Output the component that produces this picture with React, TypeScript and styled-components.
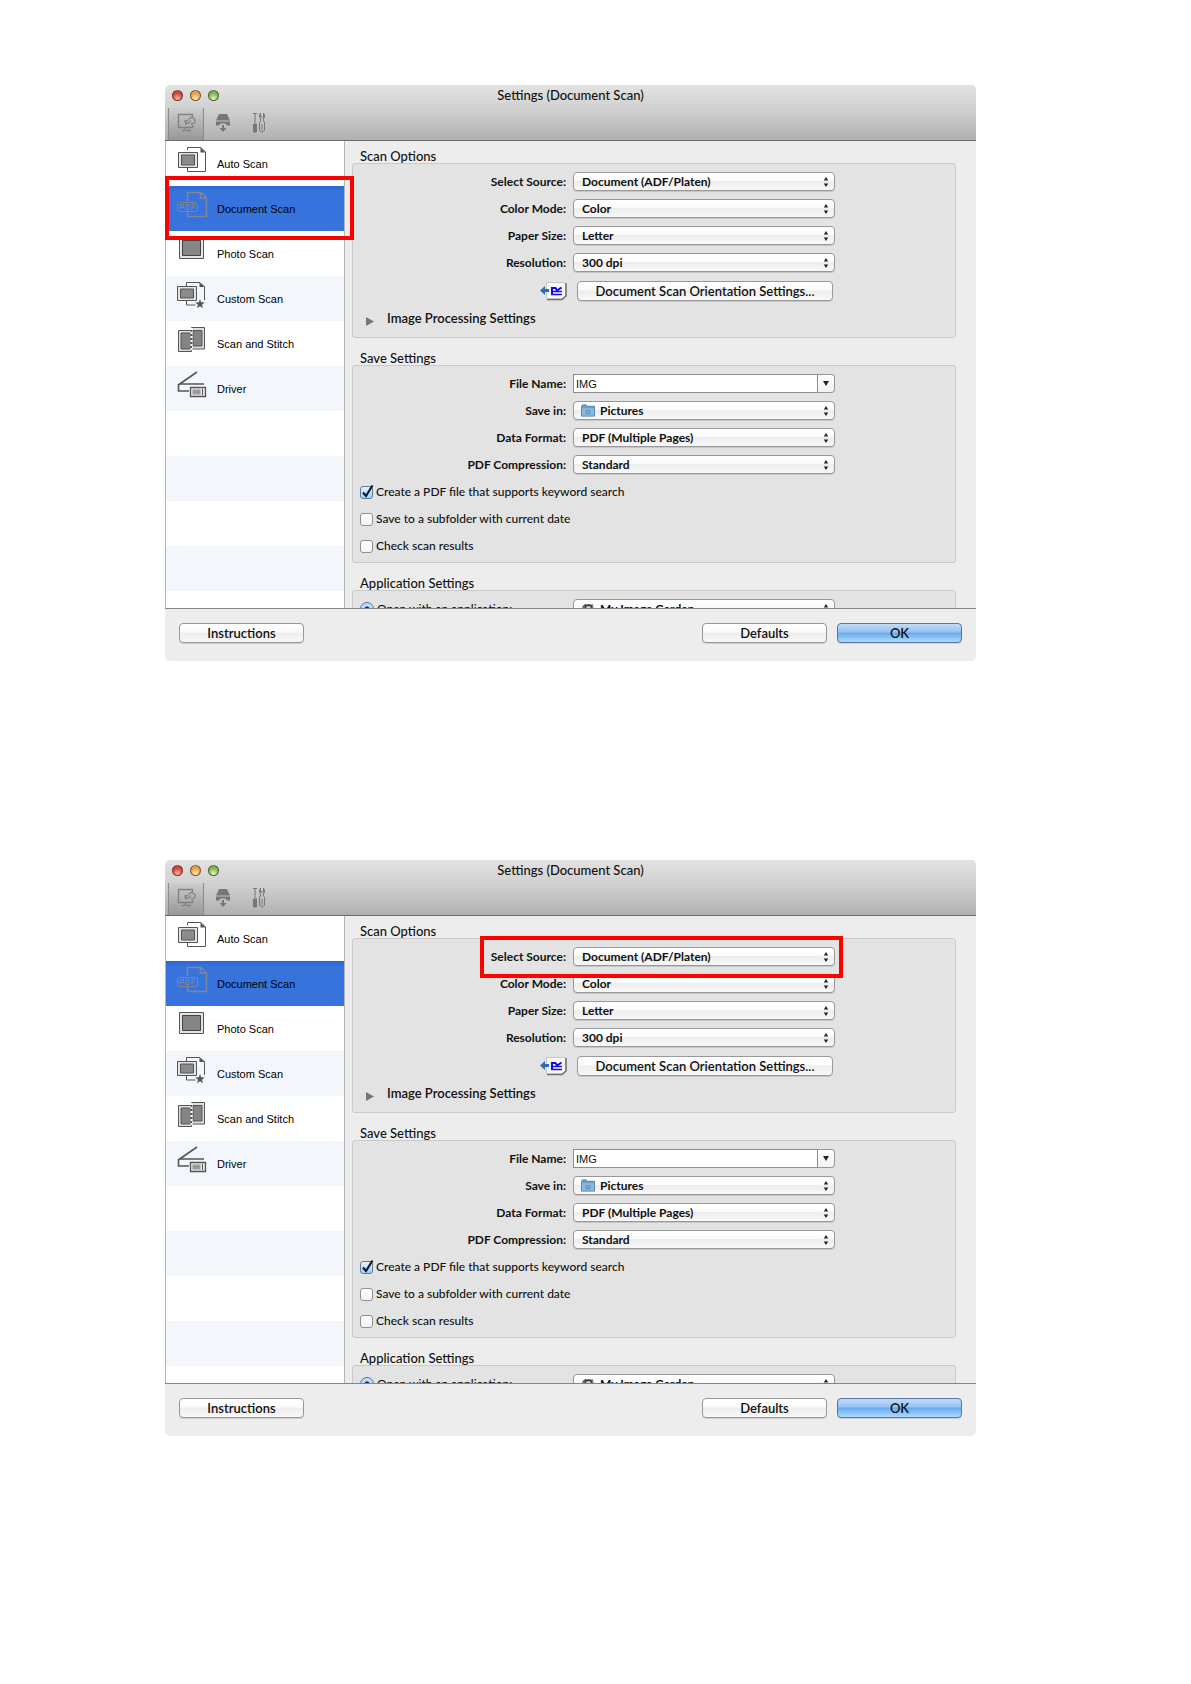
import React, { useId, useState } from "react";
import styled, { createGlobalStyle, css } from "styled-components";

const GlobalStyle = createGlobalStyle`
  *, *::before, *::after { box-sizing: border-box; }
  body {
    margin: 0;
    background: #fff;
    color: #111;
    font: 500 12px/16px Lato, "Open Sans", sans-serif;
  }
  button, input, select { font: inherit; color: inherit; margin: 0; }
  h1, h2, ul { margin: 0; padding: 0; font: inherit; }
`;

const Page = styled.main`
  display: flex;
  flex-direction: column;
  gap: 199px;
  padding: 85px 215px 248px 165px;
`;

const Window = styled.section`
  display: flex;
  flex-direction: column;
  background: #ededed;
  border-radius: 5px;
`;

const Header = styled.header`
  padding: 2px 3px 0;
  border-bottom: 1px solid #6c6c6c;
  border-radius: 5px 5px 0 0;
  background: linear-gradient(#e2e2e2, #d0d0d0 45%, #b0b0b0);
`;

const TitleBar = styled.div`
  display: grid;
  grid-template-columns: 1fr auto 1fr;
  align-items: center;
  height: 14px;
  margin-bottom: 7px;
`;

const Title = styled.h1`
  font-size: 13px;
  font-weight: 500;
`;

const Lights = styled.div`
  display: flex;
  gap: 7px;
  padding-left: 4px;
`;

const Light = styled.button<{ $tone: string; $glow: string }>`
  width: 11px;
  height: 11px;
  padding: 0;
  border: 1px solid rgba(60, 40, 30, 0.65);
  border-radius: 50%;
  background: radial-gradient(circle at 50% 85%, ${(p) => p.$glow}, ${(p) => p.$tone} 60%);
`;

const Toolbar = styled.div`
  display: flex;
`;

const ToolTab = styled.button<{ $active?: boolean }>`
  display: flex;
  align-items: center;
  justify-content: center;
  width: 36px;
  height: 32px;
  padding: 0 0 2px 1px;
  border: 0;
  background: none;
  ${(p) =>
    p.$active &&
    css`
      border: solid #8a8a8a;
      border-width: 0 1px;
      background: linear-gradient(rgba(0, 0, 0, 0.02), rgba(0, 0, 0, 0.14));
    `}
`;

const Body = styled.div`
  display: flex;
  height: 467px;
  overflow: hidden;
`;

const Sidebar = styled.nav`
  position: relative;
  z-index: 1;
  flex: none;
  width: 180px;
  border: solid #b4b4b4;
  border-width: 0 1px;
  background: repeating-linear-gradient(#fff 0 45px, #f3f7fb 45px 90px);
`;

const ScanList = styled.ul`
  list-style: none;
`;

const ScanItem = styled.li`
  position: relative;
`;

const ScanTab = styled.button<{ $active: boolean }>`
  display: flex;
  align-items: center;
  gap: 9px;
  width: 100%;
  height: 45px;
  padding: 0 0 0 11px;
  border: 0;
  background: ${(p) => (p.$active ? "linear-gradient(#2b68d0, #3673dc 6px)" : "none")};
  color: #000;
  font: 11px/16px "Liberation Sans", Arial, sans-serif;
  text-align: left;

  svg { flex: none; margin-bottom: 7px; }
`;

const Panel = styled.div`
  flex: 1;
  min-width: 0;
  padding: 9px 20px 0 7px;
`;

const Group = styled.section`
  margin-bottom: 14px;
`;

const GroupTitle = styled.h2`
  padding-left: 8px;
  font-size: 13px;
  line-height: 13px;
`;

const GroupBox = styled.div`
  padding: 8px 8px 8px 7px;
  border: 1px solid #cacaca;
  border-radius: 3px;
  background: #e3e3e3;
`;

const Rows = styled.div`
  display: flex;
  flex-direction: column;
  gap: 8px;
`;

const Row = styled.div`
  display: grid;
  grid-template-columns: 206px 262px;
  column-gap: 7px;
  align-items: center;
`;

const RowLabel = styled.label`
  text-align: right;
  font-weight: 700;
`;

const Annotation = styled.span<{ $inset: string }>`
  position: absolute;
  z-index: 2;
  inset: ${(p) => p.$inset};
  border: 4px solid #fe0000;
  pointer-events: none;
`;

const SelectFrame = styled.div`
  position: relative;
  display: grid;
  grid-template-columns: 22px 1fr 18px;
  align-items: center;

  svg { grid-row: 1; justify-self: center; z-index: 1; pointer-events: none; }
  svg:last-of-type { grid-column: 3; }
`;

const raised = css`
  border: 1px solid #989898;
  border-radius: 4px;
  background: linear-gradient(#fff, #fbfbfb 45%, #ededed 50%, #f8f8f8);
  box-shadow: 0 1px 0 rgba(0, 0, 0, 0.12);
`;

const SelectBox = styled.select<{ $icon: boolean }>`
  ${raised}
  grid-area: 1 / 1 / 2 / 4;
  appearance: none;
  width: 100%;
  height: 19px;
  padding: 0 20px 0 ${(p) => (p.$icon ? 26 : 8)}px;
  font-weight: 700;
`;

const IconSlot = styled.span`
  display: flex;
  grid-area: 1 / 1;
  z-index: 1;
  padding-left: 8px;
  pointer-events: none;
`;

const Combo = styled.div`
  display: flex;
  height: 19px;
`;

const ComboInput = styled.input`
  flex: 1;
  min-width: 0;
  padding: 0 2px;
  border: 1px solid #8d8d8d;
  background: #fff;
  font: 11px/16px "Liberation Sans", Arial, sans-serif;
`;

const ComboButton = styled.button`
  display: flex;
  align-items: center;
  justify-content: center;
  width: 17px;
  padding: 0;
  border: 1px solid #989898;
  border-left: 0;
  border-radius: 0 4px 4px 0;
  background: linear-gradient(#fff, #f2f2f2);
`;

const Orientation = styled.div`
  display: grid;
  grid-template-columns: 217px 256px;
  align-items: center;
  margin: 9px 0;

  svg { justify-self: end; margin-right: 10px; }
`;

const PushButton = styled.button<{ $primary?: boolean }>`
  ${raised}
  height: 20px;
  padding: 0 8px;
  font-size: 13px;
  font-weight: 600;
  ${(p) =>
    p.$primary &&
    css`
      border-color: #5a72a8;
      background: linear-gradient(#c3dcf6, #94c1f2 45%, #6aa9ee 50%, #a9dcff);
    `}
`;

const Disclosure = styled.button`
  display: flex;
  align-items: center;
  gap: 13px;
  margin-bottom: 3px;
  padding: 0 0 0 6px;
  border: 0;
  background: none;
  font-size: 13px;
  font-weight: 600;

  svg { margin-top: 6px; }
`;

const Checks = styled.div`
  display: flex;
  flex-direction: column;
  gap: 11px;
  margin-top: 10px;
`;

const Check = styled.label`
  display: flex;
  align-items: center;
  gap: 3px;
`;

const CheckFrame = styled.span`
  display: grid;
  width: 13px;
  height: 13px;

  > * { grid-area: 1 / 1; }
  svg { overflow: visible; pointer-events: none; }
`;

const CheckInput = styled.input`
  appearance: none;
  width: 13px;
  height: 13px;
  border: 1px solid #8f8f8f;
  border-radius: 3px;
  background: linear-gradient(#fff, #f4f4f4);

  &:checked {
    border-color: #5a7ba0;
    background: linear-gradient(#e4f2fc, #9fd0f4);
  }
`;

const RadioRow = styled.div`
  display: grid;
  grid-template-columns: 213px 262px;
  align-items: center;
`;

const Radio = styled.input`
  appearance: none;
  width: 14px;
  height: 14px;
  border: 1px solid #4d70a6;
  border-radius: 50%;
  background: radial-gradient(circle, #15233c 0 2px, #b5dbf8 3px, #cfe5f8);
`;

const Footer = styled.footer`
  display: flex;
  align-items: flex-start;
  gap: 10px;
  height: 53px;
  padding: 14px 14px 0;
  border-top: 1px solid #858585;

  button { width: 125px; }
  button:first-child { margin-right: auto; }
`;

const UpDown = () => (
  <svg width="6" height="10" viewBox="0 0 6 10" fill="#222">
    <path d="M3 0 5.2 3.6H.8zM3 10 .8 6.4h4.4z" />
  </svg>
);

const FolderIcon = () => (
  <svg width="15" height="13" viewBox="0 0 15 13">
    <path d="M.5 2.500 1.500.5h4l1 1.500h8v10.500H.5z" fill="#6d9fc9" stroke="#4f81aa" />
    <path d="M1 4h13v8H1z" fill="#8ab8dc" />
    <path d="M5.500 6.500h4v3.500h-4z" fill="#79a9d0" stroke="#5f92bc" />
  </svg>
);

const GardenIcon = () => (
  <svg width="15" height="14" viewBox="0 0 15 14">
    <path d="M1 5 4 2h9l1 10H2z" fill="#8a857e" />
    <circle cx="8" cy="6.500" r="3.500" fill="#d8d4cc" stroke="#3a3632" strokeWidth="1.500" />
    <path d="M2 4.500 5 2" stroke="#2c2926" />
  </svg>
);

const OrientationIcon = () => (
  <svg width="27" height="20" viewBox="0 0 27 20">
    <path d="M6.500 1.500h19v13l-3.500 3.500H6.500z" fill="#f6f6f6" stroke="#c8c8c8" />
    <path d="M26 2v13l-4 3.500H7" fill="none" stroke="#6e6e6e" strokeWidth="1.500" />
    <path d="M0 9.500 5 5v3h4v3H5v3z" fill="#2e6fb4" />
    <path d="M11 13.500h11M11 10.500h11" fill="none" stroke="#1a10ee" strokeWidth="1.600" />
    <path d="M12 13V7h3.500l1.500 2.500L21.500 6.500" fill="none" stroke="#1208f0" strokeWidth="2" />
  </svg>
);

const scanIcons: Record<string, React.ReactNode> = {
  auto: (
    <>
      <path d="M10.500 4V1.500H24l4.500 4.500v19.500H10.500V22" fill="none" stroke="#555" />
      <path d="M23.500 1.500v5h5z" fill="#555" />
      <path d="M1.500 6.500h19v15h-19z" fill="#e4e4e4" stroke="#555" />
      <path d="M4.500 9h13v10h-13z" fill="#8b8b8b" stroke="#555" />
    </>
  ),
  document: (
    <g stroke="#80869a" fill="none">
      <path d="M10.500 10V1.500H24l5.500 5v19H10.500V21M23.500 2v5H29" strokeWidth="1.500" />
      <rect x=".5" y="11.500" width="20" height="9" rx="2" />
      <path d="M3 18.500v-5h3.500v3H3M9 13.500v5h3v-5zM15 18.500v-5h4M15 16h3" />
    </g>
  ),
  photo: (
    <>
      <path d="M2.500 1.500h24v21h-24z" fill="#e4e4e4" stroke="#555" />
      <path d="M5.500 4.500h18v15h-18z" fill="#868686" stroke="#444" />
    </>
  ),
  custom: (
    <>
      <path d="M9.500 5V1.500H23l4.500 4.500v13M9.500 20v4h9" fill="none" stroke="#555" />
      <path d="M22.500 1.500V6H28z" fill="#555" />
      <path d="M.5 5.500h19v14H.5z" fill="#e4e4e4" stroke="#555" />
      <path d="M3.500 8h13v9h-13z" fill="#8b8b8b" stroke="#555" />
      <path d="m23 18 1.200 3.300 3.600.2-2.800 2.300 1 3.500-3-2-3 2 1-3.500-2.800-2.300 3.600-.2z" fill="#555" />
    </>
  ),
  stitch: (
    <>
      <path d="M1.500 4.500h13v21h-13z" fill="#dedede" stroke="#555" />
      <path d="M4 7h10v16H4z" fill="#848484" stroke="#555" />
      <path d="M14.500 1.500h13v21.500h-13z" fill="#dedede" stroke="#555" />
      <path d="M16 4.500h9v15.500h-9z" fill="#848484" stroke="#555" />
      <path d="M14.500 2v24" stroke="#fff" strokeWidth="2" strokeDasharray="2 2" />
    </>
  ),
  driver: (
    <>
      <path d="M20 1 2 13.500M2 13h25M1.500 13v7H12" fill="none" stroke="#555" strokeWidth="1.600" />
      <path d="M13.500 16.500h15v9h-15z" fill="#e8e8e8" stroke="#555" strokeWidth="1.300" />
      <path d="M15.500 18.500h8v5h-8z" fill="#9a9a9a" />
      <path d="M25.500 18v6" stroke="#555" />
    </>
  ),
};

const scanModes = [
  ["auto", "Auto Scan"],
  ["document", "Document Scan"],
  ["photo", "Photo Scan"],
  ["custom", "Custom Scan"],
  ["stitch", "Scan and Stitch"],
  ["driver", "Driver"],
];

function PopUp({ id, value, icon, children }: { id: string; value: string; icon?: React.ReactNode; children?: React.ReactNode }) {
  return (
    <SelectFrame>
      <SelectBox id={id} $icon={Boolean(icon)} defaultValue={value}>
        <option>{value}</option>
      </SelectBox>
      {icon && <IconSlot>{icon}</IconSlot>}
      <UpDown />
      {children}
    </SelectFrame>
  );
}

function Field({ label, value, icon, children }: { label: string; value: string; icon?: React.ReactNode; children?: React.ReactNode }) {
  const id = useId();
  return (
    <Row>
      <RowLabel htmlFor={id}>{label}</RowLabel>
      <PopUp id={id} value={value} icon={icon}>
        {children}
      </PopUp>
    </Row>
  );
}

function CheckOption({ label, initial = false }: { label: string; initial?: boolean }) {
  const [on, setOn] = useState(initial);
  return (
    <Check>
      <CheckFrame>
        <CheckInput type="checkbox" checked={on} onChange={() => setOn(!on)} />
        {on && (
          <svg width="13" height="13" viewBox="0 0 13 13">
            <path d="M3 6.500 6 10 12.500-.5" fill="none" stroke="#10182c" strokeWidth="2.200" />
          </svg>
        )}
      </CheckFrame>
      {label}
    </Check>
  );
}

function SettingsWindow({ highlight }: { highlight: "mode" | "source" }) {
  const fileId = useId();
  const openId = useId();
  const appId = useId();
  return (
    <Window>
      <Header>
        <TitleBar>
          <Lights>
            <Light aria-label="Close" $tone="#d3453c" $glow="#ffb3a6" />
            <Light aria-label="Minimize" $tone="#e9a04a" $glow="#ffeeb0" />
            <Light aria-label="Zoom" $tone="#7fb455" $glow="#dcffb8" />
          </Lights>
          <Title>Settings (Document Scan)</Title>
        </TitleBar>
        <Toolbar>
          <ToolTab $active aria-label="Scanning from a computer">
            <svg width="20" height="20" viewBox="0 0 20 20" fill="none" stroke="#808080" strokeWidth="1.300">
              <path d="M15.500 4V1.500H1.500v13h14V12M5 17.500h2M8 15v3M9 17.500h5" />
              <path d="M9 11.500 8 8l3.500-1M8.500 8.500C10 12 13 9 14 7.500M12 6.500q1.500-3 4-1.500 2.500 1 2 4-1 2-4 2" />
            </svg>
          </ToolTab>
          <ToolTab aria-label="Scanning from the operation panel">
            <svg width="16" height="20" viewBox="0 0 16 20" fill="#777">
              <path d="M4 1h8l3 6.500H1zM1 8.500h14v4h-3l-1.500-2h-5l-1.500 2H1zM7 12h2v3h2.500L8 19l-3.500-4H7z" />
            </svg>
          </ToolTab>
          <ToolTab aria-label="General settings">
            <svg width="14" height="22" viewBox="0 0 14 22" fill="none" stroke="#777">
              <path d="M1 1.500h4M3 1v10" />
              <path d="M1.500 12h3v8h-3z" fill="#777" />
              <path d="M8.500 1Q6 4 8.500 7v2Q7 10 7.500 12v6q2.500 4 5 0v-6q.5-2-1-3V7Q14 4 11.500 1v4h-3zM10 12v6" />
            </svg>
          </ToolTab>
        </Toolbar>
      </Header>
      <Body>
        <Sidebar>
          <ScanList>
            {scanModes.map(([key, label]) => (
              <ScanItem key={key}>
                <ScanTab $active={key === "document"}>
                  <svg width="31" height="28" viewBox="0 0 31 28">
                    {scanIcons[key]}
                  </svg>
                  <span>{label}</span>
                </ScanTab>
                {key === "document" && highlight === "mode" && <Annotation $inset="-10px -10px -9px -1px" />}
              </ScanItem>
            ))}
          </ScanList>
        </Sidebar>
        <Panel>
          <Group>
            <GroupTitle>Scan Options</GroupTitle>
            <GroupBox>
              <Rows>
                <Field label="Select Source:" value="Document (ADF/Platen)">
                  {highlight === "source" && <Annotation $inset="-11px -8px -12px -93px" />}
                </Field>
                <Field label="Color Mode:" value="Color" />
                <Field label="Paper Size:" value="Letter" />
                <Field label="Resolution:" value="300 dpi" />
              </Rows>
              <Orientation>
                <OrientationIcon />
                <PushButton>Document Scan Orientation Settings...</PushButton>
              </Orientation>
              <Disclosure>
                <svg width="8" height="9" viewBox="0 0 8 9" fill="#767676">
                  <path d="M0 0 8 4.500 0 9z" />
                </svg>
                Image Processing Settings
              </Disclosure>
            </GroupBox>
          </Group>
          <Group>
            <GroupTitle>Save Settings</GroupTitle>
            <GroupBox>
              <Rows>
                <Row>
                  <RowLabel htmlFor={fileId}>File Name:</RowLabel>
                  <Combo>
                    <ComboInput id={fileId} type="text" defaultValue="IMG" />
                    <ComboButton aria-label="Recent names">
                      <svg width="6" height="5" viewBox="0 0 6 5" fill="#222">
                        <path d="M0 0h6L3 5z" />
                      </svg>
                    </ComboButton>
                  </Combo>
                </Row>
                <Field label="Save in:" value="Pictures" icon={<FolderIcon />} />
                <Field label="Data Format:" value="PDF (Multiple Pages)" />
                <Field label="PDF Compression:" value="Standard" />
              </Rows>
              <Checks>
                <CheckOption label="Create a PDF file that supports keyword search" initial />
                <CheckOption label="Save to a subfolder with current date" />
                <CheckOption label="Check scan results" />
              </Checks>
            </GroupBox>
          </Group>
          <Group>
            <GroupTitle>Application Settings</GroupTitle>
            <GroupBox>
              <RadioRow>
                <Check htmlFor={openId}>
                  <Radio id={openId} type="radio" defaultChecked />
                  Open with an application:
                </Check>
                <PopUp id={appId} value="My Image Garden" icon={<GardenIcon />} />
              </RadioRow>
            </GroupBox>
          </Group>
        </Panel>
      </Body>
      <Footer>
        <PushButton>Instructions</PushButton>
        <PushButton>Defaults</PushButton>
        <PushButton $primary>OK</PushButton>
      </Footer>
    </Window>
  );
}

export default function App() {
  return (
    <>
      <GlobalStyle />
      <Page>
        <SettingsWindow highlight="mode" />
        <SettingsWindow highlight="source" />
      </Page>
    </>
  );
}
